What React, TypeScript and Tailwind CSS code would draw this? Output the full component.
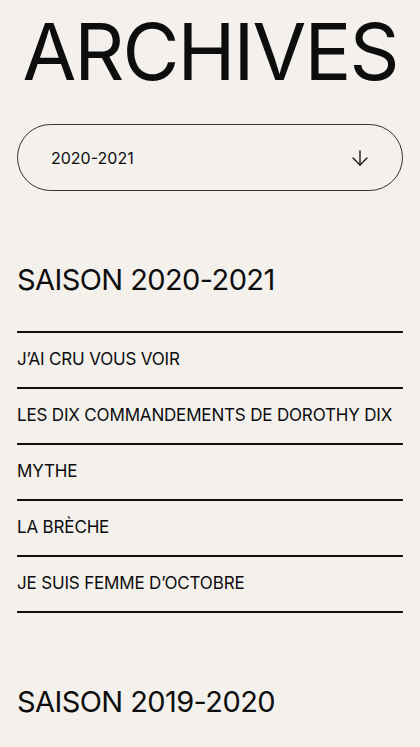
import { ArrowDown } from "lucide-react";

const seasons = [
  {
    title: "SAISON 2020-2021",
    shows: [
      "J’AI CRU VOUS VOIR",
      "LES DIX COMMANDEMENTS DE DOROTHY DIX",
      "MYTHE",
      "LA BRÈCHE",
      "JE SUIS FEMME D’OCTOBRE",
    ],
  },
  { title: "SAISON 2019-2020", shows: [] },
];

export default function App() {
  return (
    <div className="min-h-screen bg-[#f4f1ed] px-[17px] text-[#0d0d0d] font-['Inter',sans-serif]">
      <h1 className="pt-[10px] text-center text-[78px] leading-[84px] tracking-[-0.025em]">ARCHIVES</h1>

      <button
        type="button"
        className="mt-[30px] flex h-[67px] w-full items-center justify-between rounded-full border-[1.5px] border-[#333] pl-[33px] pr-[30px] text-[16px]"
      >
        <span>2020-2021</span>
        <ArrowDown className="h-6 w-6" strokeWidth={1.3} />
      </button>

      {seasons.map((s) => (
        <section key={s.title} className="mt-[70px]">
          <h2 className="text-[29px] leading-[38px] tracking-[-0.02em]">{s.title}</h2>
          {s.shows.length > 0 && (
            <ul className="mt-[32px] border-t-2 border-[#111]">
              {s.shows.map((t) => (
                <li
                  key={t}
                  className="flex h-[56px] items-center border-b-2 border-[#111] text-[17px] tracking-[-0.01em]"
                >
                  {t}
                </li>
              ))}
            </ul>
          )}
        </section>
      ))}
    </div>
  );
}
